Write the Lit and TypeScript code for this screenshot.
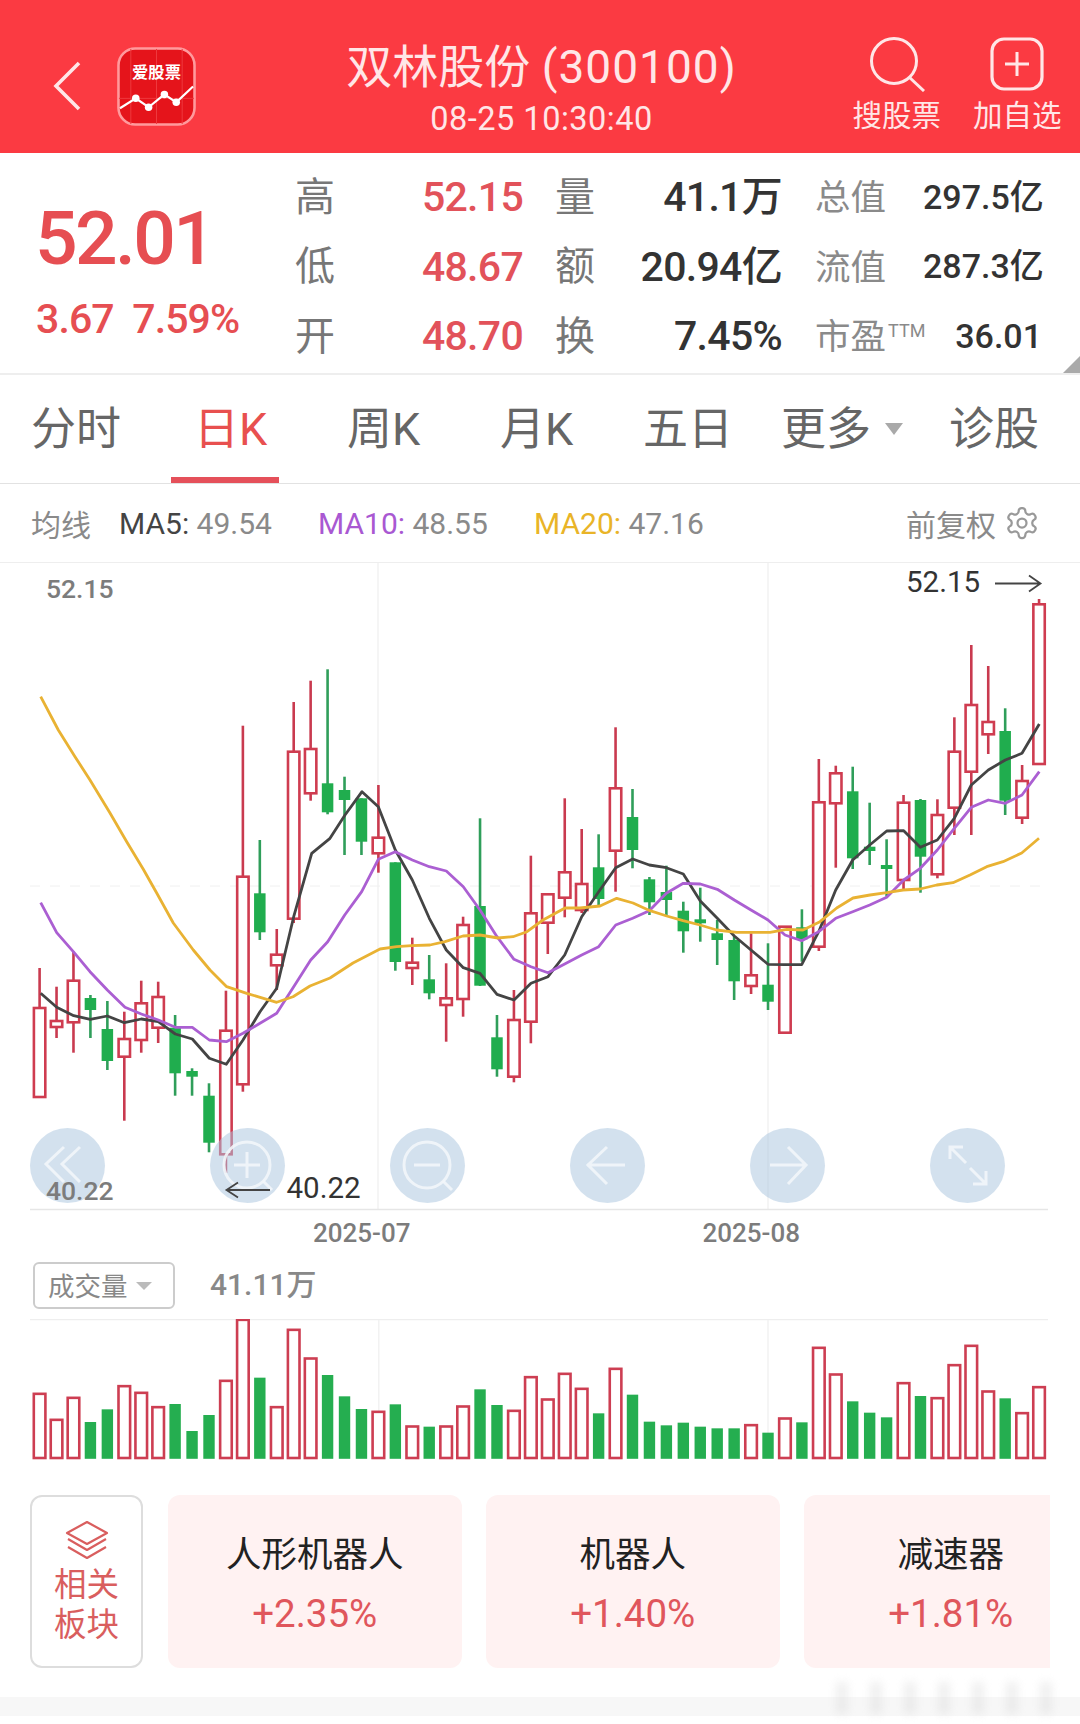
import { LitElement, html, css, svg } from "lit";
import { customElement } from "lit/decorators.js";

type C = [number, number, number, number, "r" | "g"];
// wick top, body top, body bottom, wick bottom, colour
const candles: C[] = [
  [968,1008,1097,1097,"r"],[986.7,1021,1027,1038,"r"],[951.7,980.7,1022.3,1052.7,"r"],[995,998,1010,1038,"g"],
  [1001,1029,1061,1070,"g"],[1011.7,1039,1056.7,1120.7,"r"],[980.7,1003.3,1040,1052.7,"r"],[981.7,997,1027.7,1043,"r"],
  [1015,1027.7,1073.3,1095.7,"g"],[1068.3,1071,1076.7,1095.7,"g"],[1083.3,1095.7,1142.7,1152.3,"g"],[990.7,1030.7,1154.3,1173,"r"],
  [725.7,876.7,1084.3,1091.7,"r"],[840,893.3,932.3,940,"g"],[929,954.7,965.3,990,"r"],[702,751.7,918.7,923,"r"],
  [680.7,749,793.3,800.7,"r"],[669.3,783.3,812.3,814.3,"g"],[776.7,790,800,855,"g"],[798.3,798.3,841.7,855,"g"],
  [785,837.7,853.3,872.7,"r"],[862.3,862.3,962,970.7,"g"],[937.7,962.7,968,985,"r"],[955,979.3,993.3,999.3,"g"],
  [963.3,998.3,1005,1041.7,"r"],[916.7,925,999,1016.7,"r"],[818.3,906,985.7,986,"g"],[1015,1037.3,1069.3,1076.7,"g"],
  [990,1020,1076.7,1082.3,"r"],[855.7,913.3,1021.7,1043.3,"r"],[894.3,894.3,922.7,954,"r"],[798.3,872.3,897.7,917.3,"r"],
  [829,884,910,913,"r"],[834.3,867.3,899,905,"g"],[727.3,788.3,850.7,891.7,"r"],[789,817,850,868.3,"g"],
  [877,879.3,902.3,915,"g"],[865.7,892,900,915,"g"],[901.7,910.7,931.3,952.7,"g"],[887.7,919.3,923.3,941.7,"g"],
  [920,933.3,940,965,"g"],[936,940,981.3,1000,"g"],[933.3,975.3,986,994,"r"],[943.3,984.7,1001.7,1010,"g"],
  [926.7,926.7,1032.7,1032.7,"r"],[909.3,927.3,939.3,961.7,"g"],[759,802.3,946.7,951,"r"],[765.7,773.3,803.3,867.7,"r"],
  [766.7,791.3,858.3,869,"g"],[802.7,846.7,851,865,"g"],[839.3,865,869,896.7,"g"],[795,802.7,880,890,"r"],
  [799,800,856.7,892.7,"g"],[799.3,815,874.3,878.3,"r"],[717.3,751.7,807.7,835,"r"],[645,705,771.7,835,"r"],
  [666,722,734.3,754,"r"],[708.3,731,800.7,815,"g"],[765,781,817.7,824,"r"],[599,604.3,764,764,"r"],
];

const volTops = [430,508,442,516,478,407,427,470,462,543,495,391,208,383,470,238,324,375,439,477,484,463,528,530,528,468,418,465,481,380,
  447,370,415,490,355,434,515,526,518,530,535,535,524,548,504,517,292,372,454,488,502,398,438,443,344,286,423,445,488,410];
const volColors = "RRRGGRRRGGGRRGRRRGGGRGRGRRGGRR" + "RRRGRGGGGGGGRGRGRRGGGRGRRRRGRR";

const ma20 = "40.7,696.7 58.3,730 75,756.7 90,780 110,813 126.7,841.7 143.3,869.3 156.7,893 173.3,923 193.3,950 210,970 226.7,986.7 246.7,993.3 276.7,1002.3 293,996.7 310,986 330,978 353,963 380,949 396.7,946.7 411.7,945.7 430,945 445,941.7 463,936 480,935 498,938 513,936.7 527,931.7 543,920 565,908 580,908 600,906 616.7,898.3 633,903 650,910.7 666.7,916 683,920.7 700,925 716.7,930 736.7,932.3 770,932.3 786.7,929.3 803,930 820,921.7 836.7,908 853,898 870,895 886.7,892.7 903,890 920,889 936.7,885 953,882.7 970,875 986.7,866.7 1003,861.7 1021.7,853 1039,838.3";
const ma10 = "40.7,902.7 56.7,932.7 73.3,951.7 90,971.7 107.3,990 125,1007.3 141.3,1014 158.3,1020 175.3,1027.3 192.3,1027.3 209.3,1040 226.3,1041.7 243,1033.3 260,1023.3 276.7,1013.3 293.7,986.7 310.7,960 327.7,941.7 344.7,915 361.7,891.7 378.3,859.3 395.3,851.7 412.3,860 429.3,866.7 446.3,871 463.3,886.7 480,910 497,936.7 514,959.3 531,966.7 548,972.7 564.7,964 581.7,955 598.7,946.7 615.7,925 632.7,918.3 649.3,910.7 666.3,893.3 683.3,883.3 700.3,884 717.3,889.3 734.3,900 751,910 768,920 785,935 801.7,940.7 818.7,931.7 835.7,918.3 852.7,911.7 869.7,905 886.7,897.3 903.7,880 920.3,868.3 937.3,850 954.3,828.3 971.3,807.3 988.3,800 1005.3,803.3 1022,795 1039.3,771.7";
const ma5 = "40.7,993.3 56.7,1007.3 73.7,1015.7 90.3,1019.3 107.3,1016 124.3,1022.7 141.3,1019 158.3,1021.7 175.3,1034 192.3,1039 209.3,1058.3 226.3,1064.3 243,1040 260,1011.7 276.7,988.3 293.7,916.7 311.7,853.3 330,838.3 345,815 362,791.7 378.3,806.7 395.3,850 412.3,880 429.3,918.3 446.3,950 463.3,967.7 480,973.3 497,994.3 514,1000 531,983.3 548,976.7 564.7,955 581.7,916.7 598.7,891.7 615.7,867.7 632.7,859 649.3,865 666.3,867.7 683.3,874 700.3,901 717.3,918.3 734.3,936 751,950 768,964.3 785,964.7 801.7,964.7 818.7,931.7 835.7,890 852.7,860 869.7,845 886.7,831 903.7,830.7 920.3,847.3 937.3,840 954.3,818.3 971.3,785 988.3,770 1005.3,760 1022,753.3 1039.3,724";

const xAt = (i: number) => 39.6 + 16.94 * i;

const tabs = [
  { t: "分时", w: 171, p: 31 },
  { t: "日K", w: 108, p: 23, on: true },
  { t: "周K", w: 221, p: 68 },
  { t: "月K", w: 143, p: 0 },
  { t: "五日", w: 138, p: 0 },
  { t: "更多", w: 168, p: 0, more: true },
  { t: "诊股", w: 130, p: 0 },
];

const cards = [
  ["人形机器人", "+2.35%"],
  ["机器人", "+1.40%"],
  ["减速器", "+1.81%"],
];

@customElement("app-root")
export class AppRoot extends LitElement {
  static styles = css`
    :host { display: block; width: 1080px; height: 1724px; background: #fff; overflow: hidden; position: relative;
      font-family: Roboto, "Noto Sans CJK SC", sans-serif; }
    * { box-sizing: border-box; }
    svg { display: block; }

    .header { height: 153px; background: #fb3a42; display: flex; align-items: center; color: #ffe6e7; }
    .back { margin-left: 53px; width: 28px; height: 50px; flex: none; margin-top: 19px; }
    .logo { margin-left: 36px; width: 79px; height: 79px; flex: none; margin-top: 19px; }
    .titles { flex: 1; text-align: center; padding-left: 34px; display: flex; flex-direction: column; align-items: center; }
    .title { font-size: 46px; line-height: 56px; white-space: pre; margin-top: 22px; }
    .title span { letter-spacing: 1px; }
    .time { font-size: 32.5px; line-height: 36px; margin-top: 6px; white-space: pre; letter-spacing: .5px; }
    .actions { display: flex; gap: 33px; flex: none; margin-right: 19px; margin-top: 16px; }
    .action { width: 87.5px; display: flex; flex-direction: column; align-items: center; font-size: 29.5px; line-height: 36px; white-space: nowrap; }
    .action svg { width: 60px; height: 56px; margin-bottom: 6px; }

    .stats { height: 220px; display: flex; position: relative; }
    .stats-left { width: 295px; padding-left: 37px; padding-top: 49px; color: #e64e52; font-weight: 500; }
    .price { font-size: 75px; line-height: 72px; letter-spacing: -2.6px; margin-left: -2px; }
    .change { font-size: 41px; line-height: 44px; margin-top: 23px; letter-spacing: -0.9px; white-space: pre; margin-left: -1px; }
    .stat-grid { display: grid; grid-template-columns: 41px 187px 72px 187px 141px 119px; grid-auto-rows: 69.5px; padding-top: 10px; align-items: center; }
    .lb { font-size: 40px; color: #777; line-height: 1; white-space: nowrap; }
    .lb.pad { padding-left: 32px; }
    .lb.sm { font-size: 35.5px; color: #8a8a8a; padding-left: 33px; padding-top: 2px; }
    .lb sup { font-size: 18px; font-family: Roboto, sans-serif; vertical-align: 12px; line-height: 0; margin-left: 2px; }
    .val { font-size: 41px; font-weight: 500; text-align: right; line-height: 1; letter-spacing: -0.7px; white-space: nowrap; }
    .val.up { color: #e2525a; }
    .val.dark { color: #333; }
    .val.sm { font-size: 34px; letter-spacing: 0; margin-top: -2px; }
    .corner { position: absolute; right: 0; bottom: 0; width: 0; height: 0; border-style: solid; border-width: 0 0 17px 17px; border-color: transparent transparent #aaa transparent; }

    .tabs { height: 111px; border-top: 2px solid #eee; border-bottom: 1.5px solid #e2e2e2; display: flex; }
    .tab { font-size: 45px; color: #666; height: 108px; display: flex; align-items: center; white-space: nowrap; line-height: 1; position: relative; }
    .tab.on { color: #e8504f; border-bottom: 6px solid #e5505a; padding-top: 6px; }
    .tri { width: 0; height: 0; border-style: solid; border-width: 12px 9px 0 9px; border-color: #a9a9a9 transparent transparent transparent; margin-left: 14px; }

    .ma { height: 79px; border-bottom: 1.5px solid #eee; display: flex; align-items: center; padding: 0 40px 0 31px; font-size: 30px; color: #8a8a8a; white-space: pre; }
    .ma .g { width: 88px; }
    .ma .m { width: 199px; }
    .ma .m10 { width: 216px; }
    .k5 { color: #444; } .k10 { color: #a958d2; } .k20 { color: #e9b428; }
    .ma .right { margin-left: auto; display: flex; align-items: center; gap: 8px; }
    .ma .right svg { width: 36px; height: 36px; }

    .chart { height: 687px; }
    .chart svg, .volchart svg { width: 1080px; }
    .lab { font-family: Roboto, sans-serif; font-size: 26.5px; font-weight: 500; fill: #7c7c7c; }
    .lab.d { font-size: 26px; }
    .lab2 { font-family: Roboto, sans-serif; font-size: 29.5px; fill: #333; }

    .volrow { height: 69px; display: flex; align-items: flex-start; padding: 12px 0 0 33px; }
    .select { width: 142px; height: 47px; border: 2px solid #ccc; border-radius: 6px; display: flex; align-items: center; padding: 0 0 3px 13px; font-size: 26.5px; color: #888; }
    .select .tri { border-width: 8px 8px 0 8px; border-color: #bbb transparent transparent transparent; margin-left: 8px; margin-top: 3px; }
    .volnum { margin-left: 35px; font-size: 30px; font-weight: 500; color: #888; line-height: 46px; }
    .volchart { height: 150px; }

    .related { height: 173px; margin: 26px 30px 0 30px; display: flex; align-items: flex-start; overflow: hidden; }
    .rel-btn { width: 113px; height: 173px; flex: none; border: 2px solid #ddd; border-radius: 12px; color: #d95e5e; font-size: 32.5px; line-height: 39.5px; text-align: center; display: flex; flex-direction: column; align-items: center; padding-top: 22px; }
    .rel-btn svg { width: 44px; height: 44px; margin-bottom: 3px; }
    .card { width: 293.5px; height: 173px; flex: none; background: #fff2f2; border-radius: 12px; margin-left: 24.5px; display: flex; flex-direction: column; align-items: center; text-align: center; padding-top: 35px; }
    .rel-btn + .card { margin-left: 25px; }
    .card:last-child { border-radius: 12px 0 0 12px; }
    .card .n { font-size: 35.5px; line-height: 50px; color: #222; }
    .card .p { font-size: 38.5px; line-height: 50px; color: #e0565c; margin-top: 9px; }

    .foot { height: 19px; margin-top: 29px; background: #f7f7f7; }
    .mark { position: absolute; left: 836px; top: 1682px; width: 234px; height: 32px; filter: blur(4px); opacity: .35;
      background: repeating-linear-gradient(90deg, #d4d4d4 0 12px, transparent 12px 34px); }
  `;

  private chartSvg() {
    const gridV = [378, 768];
    return svg`
      ${gridV.map((x) => svg`<line x1=${x} x2=${x} y1="563" y2="1209" stroke="#f2f2f2" stroke-width="1.5"></line>`)}
      <line x1="30" x2="1048" y1="886" y2="886" stroke="#f0f0f0" stroke-width="1" stroke-dasharray="10 10"></line>
      <line x1="30" x2="1048" y1="1209.5" y2="1209.5" stroke="#e6e6e6" stroke-width="1.5"></line>
      ${candles.map((c, i) => {
        const x = xAt(i);
        const [t, bt, bb, b, k] = c;
        if (k === "g") {
          return svg`<g><line x1=${x} x2=${x} y1=${t} y2=${b} stroke="#2f9e5a" stroke-width="2.6"></line>
            <rect x=${x - 5.75} y=${bt} width="11.5" height=${bb - bt} fill="#20ad4e"></rect></g>`;
        }
        return svg`<g><line x1=${x} x2=${x} y1=${t} y2=${bt} stroke="#c93a4f" stroke-width="2.6"></line>
          <line x1=${x} x2=${x} y1=${bb} y2=${b} stroke="#c93a4f" stroke-width="2.6"></line>
          <rect x=${x - 5.7} y=${bt} width="11.4" height=${bb - bt} fill="#fff" stroke="#cf3c50" stroke-width="2.6"></rect></g>`;
      })}
      <polyline points=${ma5} fill="none" stroke="#444" stroke-width="2.8" stroke-linejoin="round"></polyline>
      <polyline points=${ma10} fill="none" stroke="#ab5fd2" stroke-width="2.8" stroke-linejoin="round"></polyline>
      <polyline points=${ma20} fill="none" stroke="#e9b233" stroke-width="2.8" stroke-linejoin="round"></polyline>

      ${[30, 210, 390, 570, 750, 930].map((bx, i) => this.button(bx, i))}

      <text class="lab" x="46" y="598">52.15</text>
      <text class="lab" x="46" y="1200">40.22</text>
      <text class="lab2" x="906" y="592">52.15</text>
      <text class="lab2" x="286.5" y="1198">40.22</text>
      <path d="M995 583.5H1040M1029 575.5L1040.5 583.5L1029 591.5" fill="none" stroke="#444" stroke-width="1.8"></path>
      <path d="M270 1190H227M238 1182.5L226.5 1190L238 1197.5" fill="none" stroke="#444" stroke-width="1.8"></path>
      <text class="lab d" x="313" y="1241.5">2025-07</text>
      <text class="lab d" x="702.5" y="1241.5">2025-08</text>
    `;
  }

  private button(bx: number, i: number) {
    const st = `fill:none;stroke:#f2f6fa;stroke-width:3;stroke-opacity:.9`;
    const paths = [
      "M34 19L16 36L34 54M50 19L32 36L50 54",
      "M53 53L62 62M37 24V50M24 37H50",
      "M53 53L62 62M24 37H50",
      "M17 37H55M37 19L18 37L37 56",
      "M20 37H56M38 19L56 37L38 56",
      "M20 31V19H33M20 19L36 35M56 43V56H43M56 56L40 40",
    ];
    return svg`<g transform="translate(${bx} 1128)">
      <circle cx="37.5" cy="37.5" r="37.5" fill="#aac6df" fill-opacity=".52"></circle>
      ${i === 1 || i === 2 ? svg`<circle cx="37" cy="37" r="23" style=${st}></circle>` : ""}
      <path d=${paths[i]} style=${st}></path>
    </g>`;
  }

  private volSvg() {
    return svg`
      <line x1="30" x2="1048" y1="1319.5" y2="1319.5" stroke="#eee" stroke-width="1.5"></line>
      ${[378.8, 768].map((x) => svg`<line x1=${x} x2=${x} y1="1320" y2="1458" stroke="#f2f2f2" stroke-width="1.5"></line>`)}
      ${volTops.map((z, i) => {
        const x = xAt(i);
        const top = 1250 + z / 3;
        return volColors[i] === "R"
          ? svg`<rect x=${x - 5.8} y=${top + 0.5} width="11.6" height=${1457.5 - top} fill="#fff" stroke="#cd3e52" stroke-width="2.6"></rect>`
          : svg`<rect x=${x - 5.7} y=${top} width="11.4" height=${1458.8 - top} fill="#25ae50"></rect>`;
      })}
    `;
  }

  render() {
    return html`
      <div class="header">
        <svg class="back" viewBox="0 0 28 50"><path d="M26 2L3 25L26 48" fill="none" stroke="#ffe6e7" stroke-width="3.6"></path></svg>
        <svg class="logo" viewBox="0 0 80 80">
          <rect x="1.5" y="1.5" width="77" height="77" rx="17" fill="#e5141b" stroke="#ff9a9d" stroke-width="2.6"></rect>
          <path d="M2 52H78M40 2V78M14 2V78M66 2V78" stroke="#ee3a3f" stroke-width="1" fill="none"></path>
          <text x="40" y="31" text-anchor="middle" font-size="16.5" font-weight="700" fill="#fff" font-family="Noto Sans CJK SC, sans-serif">爱股票</text>
          <path d="M3 62L19 52L32 61L48 48L60 56L77 40" fill="none" stroke="#fff" stroke-width="2.2"></path>
          <circle cx="19" cy="52" r="3.8" fill="#fff"></circle><circle cx="32" cy="61" r="3.8" fill="#fff"></circle>
          <circle cx="48" cy="48" r="3.8" fill="#fff"></circle><circle cx="60" cy="56" r="3.8" fill="#fff"></circle>
        </svg>
        <div class="titles">
          <div class="title">双林股份 <span>(300100)</span></div>
          <div class="time">08-25 10:30:40</div>
        </div>
        <div class="actions">
          <div class="action">
            <svg viewBox="0 0 60 56"><circle cx="27" cy="25" r="22.5" fill="none" stroke="#ffe6e7" stroke-width="3"></circle><path d="M42 41L57 55" stroke="#ffe6e7" stroke-width="3" fill="none"></path></svg>
            搜股票
          </div>
          <div class="action">
            <svg viewBox="0 0 60 56"><rect x="5" y="3" width="50" height="50" rx="12" fill="none" stroke="#ffe6e7" stroke-width="3.2"></rect><path d="M30 16V40M18 28H42" stroke="#ffe6e7" stroke-width="3" fill="none"></path></svg>
            加自选
          </div>
        </div>
      </div>

      <div class="stats">
        <div class="stats-left">
          <div class="price">52.01</div>
          <div class="change">3.67  7.59%</div>
        </div>
        <div class="stat-grid">
          <div class="lb">高</div><div class="val up">52.15</div>
          <div class="lb pad">量</div><div class="val dark">41.1万</div>
          <div class="lb sm">总值</div><div class="val dark sm">297.5亿</div>
          <div class="lb">低</div><div class="val up">48.67</div>
          <div class="lb pad">额</div><div class="val dark">20.94亿</div>
          <div class="lb sm">流值</div><div class="val dark sm">287.3亿</div>
          <div class="lb">开</div><div class="val up">48.70</div>
          <div class="lb pad">换</div><div class="val dark">7.45%</div>
          <div class="lb sm">市盈<sup>TTM</sup></div><div class="val dark sm">36.01</div>
        </div>
        <div class="corner"></div>
      </div>

      <div class="tabs">
        ${tabs.map((t) => html`<div class="tab ${t.on ? "on" : ""}" style="width:${t.w}px;padding-left:${t.p}px">${t.t}${t.more ? html`<i class="tri"></i>` : ""}</div>`)}
      </div>

      <div class="ma">
        <span class="g">均线</span>
        <span class="m"><span class="k5">MA5:</span> 49.54</span>
        <span class="m m10"><span class="k10">MA10:</span> 48.55</span>
        <span><span class="k20">MA20:</span> 47.16</span>
        <span class="right"><span>前复权</span><svg viewBox="0 0 24 24" fill="none" stroke="#999" stroke-width="1.5"><path d="M12.22 2h-.44a2 2 0 0 0-2 2v.18a2 2 0 0 1-1 1.73l-.43.25a2 2 0 0 1-2 0l-.15-.08a2 2 0 0 0-2.73.73l-.22.38a2 2 0 0 0 .73 2.73l.15.1a2 2 0 0 1 1 1.72v.51a2 2 0 0 1-1 1.74l-.15.09a2 2 0 0 0-.73 2.73l.22.38a2 2 0 0 0 2.73.73l.15-.08a2 2 0 0 1 2 0l.43.25a2 2 0 0 1 1 1.73V20a2 2 0 0 0 2 2h.44a2 2 0 0 0 2-2v-.18a2 2 0 0 1 1-1.73l.43-.25a2 2 0 0 1 2 0l.15.08a2 2 0 0 0 2.73-.73l.22-.39a2 2 0 0 0-.73-2.73l-.15-.08a2 2 0 0 1-1-1.74v-.5a2 2 0 0 1 1-1.74l.15-.09a2 2 0 0 0 .73-2.73l-.22-.38a2 2 0 0 0-2.73-.73l-.15.08a2 2 0 0 1-2 0l-.43-.25a2 2 0 0 1-1-1.73V4a2 2 0 0 0-2-2z"></path><circle cx="12" cy="12" r="3"></circle></svg></span>
      </div>

      <div class="chart"><svg viewBox="0 563 1080 687" height="687">${this.chartSvg()}</svg></div>

      <div class="volrow">
        <div class="select">成交量<i class="tri"></i></div>
        <div class="volnum">41.11万</div>
      </div>
      <div class="volchart"><svg viewBox="0 1319 1080 150" height="150">${this.volSvg()}</svg></div>

      <div class="related">
        <div class="rel-btn">
          <svg viewBox="0 0 44 42" fill="none" stroke="#d95e5e" stroke-width="2.2" stroke-linejoin="round"><path d="M22 2L42 13L22 24L2 13Z"></path><path d="M3 19L22 30L41 19"></path><path d="M3 27L22 38L41 27"></path></svg>
          <div>相关<br />板块</div>
        </div>
        ${cards.map(([n, p]) => html`<div class="card"><div class="n">${n}</div><div class="p">${p}</div></div>`)}
      </div>
      <div class="foot"></div>
      <div class="mark"></div>
    `;
  }
}
